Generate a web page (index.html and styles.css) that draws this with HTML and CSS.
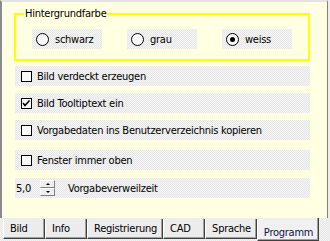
FILE: index.html
```html
<!DOCTYPE html>
<html>
<head>
    <title>Programm</title>
    <link rel="stylesheet" href="styles.css">
</head>
<body>
  <div class="window">
    <div class="panel">
        <fieldset class="group">
            <legend>Hintergrundfarbe</legend>
            <div class="radios">
                <div class="radio"><span class="dot"></span>schwarz</div>
                <div class="radio"><span class="dot"></span>grau</div>
                <div class="radio"><span class="dot checked"></span>weiss</div>
            </div>
        </fieldset>

        <div class="options">
            <div class="row"><span class="box"></span>Bild verdeckt erzeugen</div>
            <div class="row"><span class="box"><svg width="9" height="9" viewBox="0 0 9 9"><polyline points="1,4 3,6.5 7.5,1.5" fill="none" stroke="#000" stroke-width="1.6"/></svg></span>Bild Tooltiptext ein</div>
            <div class="row"><span class="box"></span>Vorgabedaten ins Benutzerverzeichnis kopieren</div>
            <div class="row row-far"><span class="box"></span>Fenster immer oben</div>
            <div class="row row-spin">
                <span class="spin-value">5,0</span>
                <span class="spin">
                    <span class="spin-btn"><span class="arrow-up"></span></span>
                    <span class="spin-btn"><span class="arrow-down"></span></span>
                </span>
                <span class="spin-label">Vorgabeverweilzeit</span>
            </div>
        </div>
    </div>

    <ul class="tabs">
        <li>Bild</li>
        <li>Info</li>
        <li>Registrierung</li>
        <li>CAD</li>
        <li>Sprache</li>
        <li class="active">Programm</li>
    </ul>
  </div>
</body>
</html>
```

FILE: styles.css
```css
    /* whole control */
    body {
      margin: 0;
      font-family: "DejaVu Sans Condensed", "Liberation Sans", sans-serif;
      font-size: 11px;
      letter-spacing: -0.25px;
      color: #000;
    }

    .window {
      width: 330px;
      height: 241px;
      background: repeating-conic-gradient(#e4e4e4 0 25%, #f6f6f6 0 50%) 0 0 / 2px 2px;
      overflow: hidden;
    }

    .panel {
      width: 328px;
      height: 218px;
      box-sizing: border-box;
      background-color: #ffffe1;
      border-top: 2px solid #e2e2e2;
      border-left: 2px solid #8a8a8a;
      border-right: 1px solid #808080;
      box-shadow: inset 1px 0 #fff;
      padding: 6px 17px 0 12px;
    }

    /* radio group */
    .group {
      margin: 0;
      padding: 9px 8px 10px 8px;
      border: 2px solid #ffff00;
      width: 296px;
      box-sizing: border-box;
    }

    .group legend {
      padding: 0 1px;
      line-height: 12px;
    }

    .radios {
      display: flex;
      justify-content: space-between;
      padding: 0 8px;
    }

    .radio {
      width: 70px;
      height: 20px;
      display: flex;
      align-items: center;
      box-sizing: border-box;
      padding-left: 4px;
      background: repeating-conic-gradient(#e4e4e4 0 25%, #f7f7f7 0 50%) 0 0 / 2px 2px;
    }

    .dot {
      width: 13px;
      height: 13px;
      box-sizing: border-box;
      border: 1px solid #000;
      border-radius: 50%;
      background-color: #f8f8f8;
      margin-right: 6px;
      display: flex;
      justify-content: center;
      align-items: center;
    }

    .dot.checked::after {
      content: "";
      width: 5px;
      height: 5px;
      border-radius: 50%;
      background-color: #000;
    }

    /* check boxes */
    .options {
      margin: 5px 0 0 1px;
      width: 295px;
      display: flex;
      flex-direction: column;
      gap: 7px;
    }

    .row {
      height: 20px;
      display: flex;
      align-items: center;
      padding-left: 6px;
      background: repeating-conic-gradient(#e4e4e4 0 25%, #f7f7f7 0 50%) 0 0 / 2px 2px;
    }

    .row-far {
      margin-top: 3px;
    }

    .box {
      width: 11px;
      height: 11px;
      box-sizing: border-box;
      border: 1px solid #000;
      background-color: #fafafa;
      margin-right: 5px;
      display: flex;
      justify-content: center;
      align-items: center;
    }

    /* spin edit */
    .row-spin {
      margin-top: 1px;
      padding-left: 1px;
    }

    .spin-value {
      width: 24px;
    }

    .spin {
      display: flex;
      flex-direction: column;
      width: 15px;
      height: 16px;
    }

    .spin-btn {
      height: 8px;
      box-sizing: border-box;
      background-color: #eeeeee;
      border-top: 1px solid #fff;
      border-left: 1px solid #fff;
      border-right: 1px solid #808080;
      border-bottom: 1px solid #808080;
      display: flex;
      justify-content: center;
      align-items: center;
    }

    .arrow-up {
      border-left: 2px solid transparent;
      border-right: 2px solid transparent;
      border-bottom: 2px solid #000;
    }

    .arrow-down {
      border-left: 2px solid transparent;
      border-right: 2px solid transparent;
      border-top: 2px solid #000;
    }

    .spin-label {
      margin-left: 13px;
    }

    /* tab strip */
    .tabs {
      list-style-type: none;
      margin: 0;
      padding: 0 0 0 3px;
      display: flex;
      height: 23px;
    }

    .tabs li {
      min-width: 42px;
      box-sizing: border-box;
      margin-top: 1px;
      height: 20px;
      padding: 3px 5px 0 6px;
      background-color: #ececec;
      border-left: 1px solid #fff;
      border-right: 1px solid #404040;
      border-bottom: 1px solid #404040;
      box-shadow: inset -1px -1px #a0a0a0;
    }

    .tabs li.active {
      margin-top: 0;
      height: 23px;
      padding-top: 8px;
      color: #10104a;
      background-color: #f0f0f0;
    }
```
